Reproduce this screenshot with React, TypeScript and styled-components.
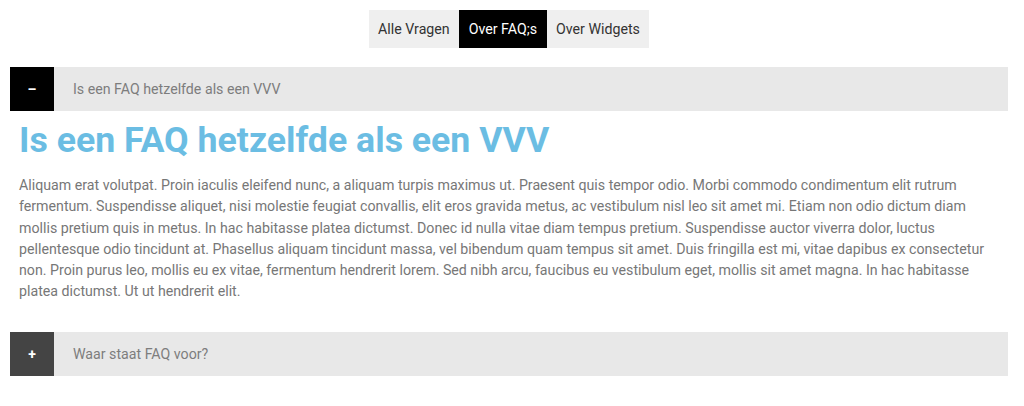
import React, { useState } from "react";
import styled, { createGlobalStyle } from "styled-components";

const Global = createGlobalStyle`
  html, body { margin: 0; padding: 0; background: #fff; }
  body { font-family: Roboto, "Liberation Sans", Arial, sans-serif; }
`;

const Page = styled.div`
  padding: 10px 16px 0 10px;
`;

const Tabs = styled.nav`
  display: flex;
  justify-content: center;
  margin-bottom: 19px;
`;

const Tab = styled.button<{ $active?: boolean }>`
  height: 38px;
  padding: 0 9.5px;
  border: 0;
  font-family: Roboto, "Liberation Sans", Arial, sans-serif;
  font-size: 14.2px;
  color: ${(p) => (p.$active ? "#fff" : "#333")};
  background: ${(p) => (p.$active ? "#000" : "#efefef")};
  cursor: pointer;
`;

const Item = styled.section`
  display: flex;
  flex-direction: column;
`;

const Bar = styled.div`
  display: flex;
  align-items: center;
  height: 44px;
  background: #e8e8e8;
  cursor: pointer;
`;

const Toggle = styled.span<{ $open?: boolean }>`
  width: 44px;
  height: 44px;
  flex: none;
  display: flex;
  align-items: center;
  justify-content: center;
  background: ${(p) => (p.$open ? "#000" : "#444")};
  color: #fff;
  font-weight: 700;
  font-size: 14px;
`;

const BarTitle = styled.span`
  margin-left: 19px;
  font-size: 14.2px;
  color: #7d7d7d;
`;

const Content = styled.div`
  padding: 0 9px 29px 9px;
`;

const Heading = styled.h2`
  margin: 8px 0 13px 0;
  font-size: 35.7px;
  line-height: 43px;
  font-weight: 700;
  color: #6bbde3;
`;

const Text = styled.p`
  margin: 0;
  font-size: 14.2px;
  line-height: 21.3px;
  color: #777;
`;

const body =
  "Aliquam erat volutpat. Proin iaculis eleifend nunc, a aliquam turpis maximus ut. Praesent quis tempor odio. Morbi commodo condimentum elit rutrum fermentum. Suspendisse aliquet, nisi molestie feugiat convallis, elit eros gravida metus, ac vestibulum nisl leo sit amet mi. Etiam non odio dictum diam mollis pretium quis in metus. In hac habitasse platea dictumst. Donec id nulla vitae diam tempus pretium. Suspendisse auctor viverra dolor, luctus pellentesque odio tincidunt at. Phasellus aliquam tincidunt massa, vel bibendum quam tempus sit amet. Duis fringilla est mi, vitae dapibus ex consectetur non. Proin purus leo, mollis eu ex vitae, fermentum hendrerit lorem. Sed nibh arcu, faucibus eu vestibulum eget, mollis sit amet magna. In hac habitasse platea dictumst. Ut ut hendrerit elit.";

const faqs = [
  { q: "Is een FAQ hetzelfde als een VVV", a: body },
  { q: "Waar staat FAQ voor?", a: body },
];

export default function App() {
  const [tab, setTab] = useState(1);
  const [open, setOpen] = useState(0);
  const tabs = ["Alle Vragen", "Over FAQ;s", "Over Widgets"];
  return (
    <Page>
      <Global />
      <Tabs>
        {tabs.map((t, i) => (
          <Tab key={t} $active={tab === i} onClick={() => setTab(i)}>
            {t}
          </Tab>
        ))}
      </Tabs>
      {faqs.map((f, i) => (
        <Item key={f.q}>
          <Bar onClick={() => setOpen(open === i ? -1 : i)}>
            <Toggle $open={open === i}>{open === i ? "–" : "+"}</Toggle>
            <BarTitle>{f.q}</BarTitle>
          </Bar>
          {open === i && (
            <Content>
              <Heading>{f.q}</Heading>
              <Text>{f.a}</Text>
            </Content>
          )}
        </Item>
      ))}
    </Page>
  );
}
